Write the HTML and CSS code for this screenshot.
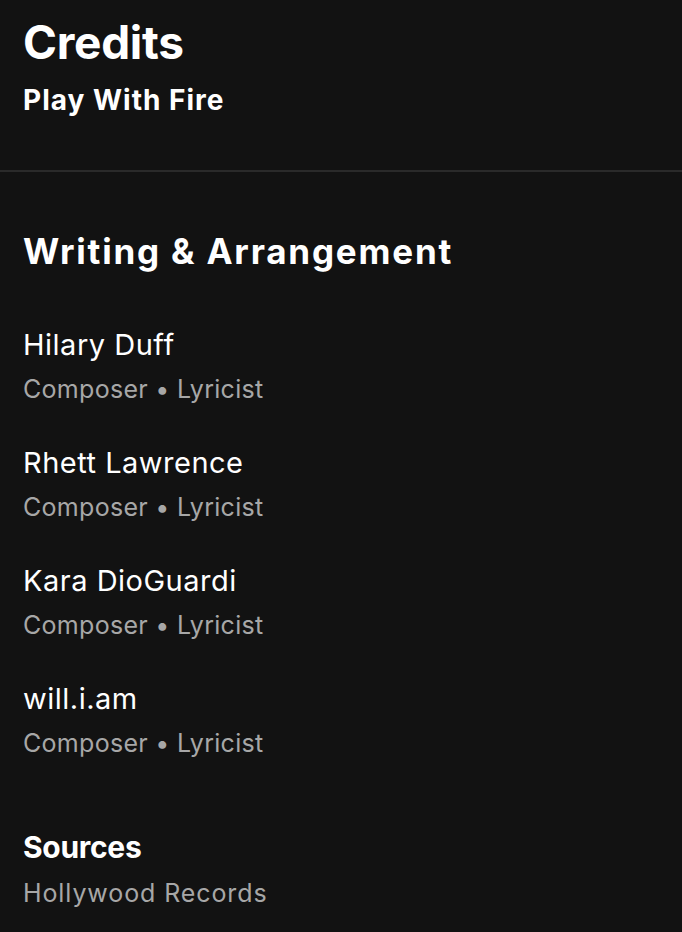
FILE: index.html
```html
<!DOCTYPE html>
<html lang="en">
<head>
    <meta charset="UTF-8">
    <meta name="viewport" content="width=device-width, initial-scale=1.0">
    <title>Credits</title>
    <link rel="stylesheet" href="styles.css">
</head>
<body>
    <div class="credits">
        <div class="credits-header">
            <h1>Credits</h1>
            <div class="track-title">Play With Fire</div>
        </div>
        <div class="section">
            <h2>Writing &amp; Arrangement</h2>
            <div class="artist">
                <div class="artist-name">Hilary Duff</div>
                <div class="artist-role">Composer • Lyricist</div>
            </div>
            <div class="artist">
                <div class="artist-name">Rhett Lawrence</div>
                <div class="artist-role">Composer • Lyricist</div>
            </div>
            <div class="artist">
                <div class="artist-name">Kara DioGuardi</div>
                <div class="artist-role">Composer • Lyricist</div>
            </div>
            <div class="artist">
                <div class="artist-name">will.i.am</div>
                <div class="artist-role">Composer • Lyricist</div>
            </div>
        </div>
        <div class="sources">
            <h3>Sources</h3>
            <div class="source-name">Hollywood Records</div>
        </div>
    </div>
</body>
</html>
```

FILE: styles.css
```css
body {
    font-family: Inter, "Liberation Sans", sans-serif;
    background-color: #121212;
    color: #fff;
    margin: 0;
    height: 932px;
    overflow: hidden;
}
.credits-header {
    padding: 14px 23px 0;
    height: 156px;
    border-bottom: 2px solid #2a2a2a;
}
h1 {
    font-size: 46px;
    font-weight: 700;
    margin: 0;
    line-height: 56px;
    letter-spacing: -0.3px;
}
.track-title {
    font-size: 28px;
    font-weight: 700;
    line-height: 36px;
    margin-top: 12px;
    letter-spacing: 1px;
}
.section {
    padding: 57px 23px 0;
}
h2 {
    font-size: 35px;
    font-weight: 700;
    margin: 0 0 52px;
    line-height: 44px;
    letter-spacing: 1.8px;
}
.artist {
    margin-bottom: 34px;
}
.artist-name {
    font-size: 29px;
    line-height: 40px;
    letter-spacing: 0.5px;
}
.artist-role {
    font-size: 25px;
    line-height: 40px;
    margin-top: 4px;
    color: #a7a7a7;
    letter-spacing: 0.3px;
}
.sources {
    padding: 30px 23px 0;
}
h3 {
    font-size: 30px;
    font-weight: 700;
    margin: 0 0 6px;
    line-height: 40px;
    letter-spacing: -0.3px;
}
.source-name {
    font-size: 25px;
    line-height: 40px;
    color: #a7a7a7;
    letter-spacing: 0.9px;
}
```
